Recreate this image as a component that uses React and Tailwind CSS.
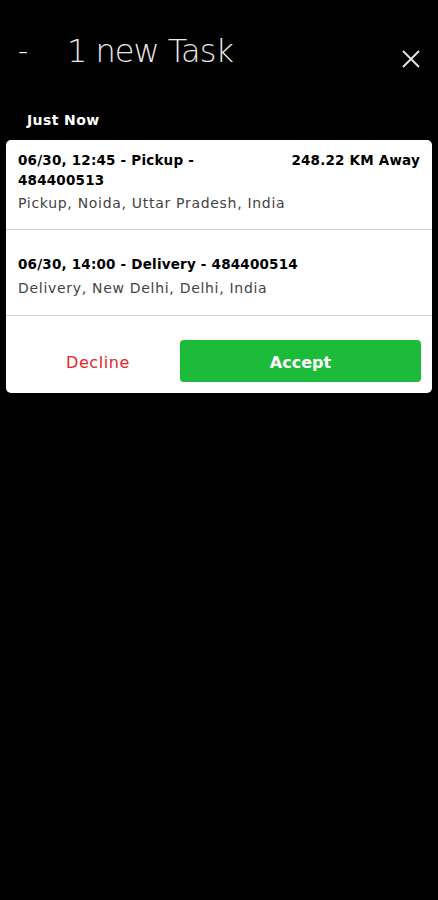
export default function App() {
  const f = { fontFamily: '"DejaVu Sans", "Noto Sans", sans-serif' };
  return (
    <div className="min-h-[900px] w-[438px] bg-black text-white" style={f}>
      <div className="flex items-center h-[102px] pl-[18px] pr-[18px]">
        <span className="text-[28px] font-light w-[49px]">-</span>
        <span className="text-[32px] font-light tracking-[-1px] text-[#e8e8e8]">1 new Task</span>
        <svg className="ml-auto mt-[16px]" width="18" height="18" viewBox="0 0 18 18" fill="none" stroke="#e8e8e8" strokeWidth="1.8">
          <path d="M1 1L17 17M17 1L1 17" />
        </svg>
      </div>
      <div className="pl-[27px] pt-[10px] text-[14px] font-bold leading-[16px] tracking-[0.4px]">Just Now</div>
      <div className="mx-[6px] mt-[12px] bg-white rounded-[5px] text-black overflow-hidden">
        <div className="px-[12px] pt-[10px] pb-[16px] border-b border-[#cfcfcf]">
          <div className="flex justify-between text-[13.5px] font-bold leading-[20px] tracking-[0.2px]">
            <span className="w-[195px]">06/30, 12:45 - Pickup - 484400513</span>
            <span>248.22 KM Away</span>
          </div>
          <div className="text-[14px] text-[#444] leading-[20px] mt-[3px] tracking-[0.7px]">Pickup, Noida, Uttar Pradesh, India</div>
        </div>
        <div className="px-[12px] pt-[24px] pb-[17px] border-b border-[#cfcfcf]">
          <div className="text-[13.5px] font-bold leading-[20px] tracking-[0.2px]">06/30, 14:00 - Delivery - 484400514</div>
          <div className="text-[14px] text-[#444] leading-[20px] mt-[4px] tracking-[0.7px]">Delivery, New Delhi, Delhi, India</div>
        </div>
        <div className="flex items-center pt-[24px] pb-[11px] pr-[11px]">
          <div className="w-[174px] pl-[10px] pt-[3px] text-center text-[16px] text-[#e5242a] tracking-[0.6px]">Decline</div>
          <div className="flex-1 h-[42px] pt-[3px] rounded-[4px] bg-[#1dbb3a] text-white text-[16px] font-bold flex items-center justify-center">Accept</div>
        </div>
      </div>
    </div>
  );
}
